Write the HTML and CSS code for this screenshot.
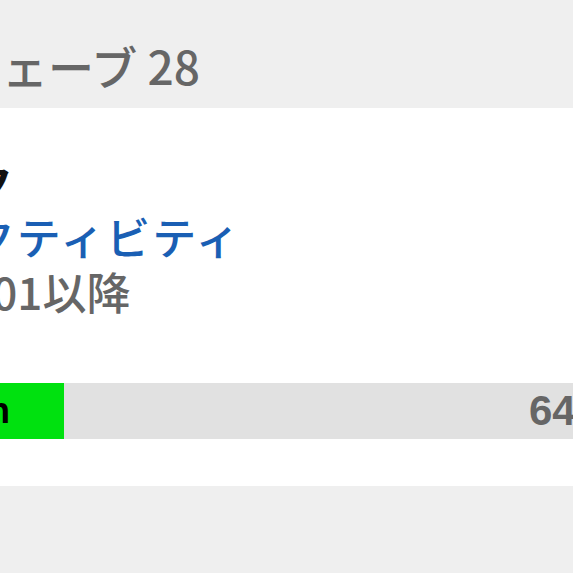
FILE: index.html
```html
<!DOCTYPE html>
<html lang="ja">
<head>
    <title>ウェーブ 28</title>
    <meta charset="utf-8">
    <link rel="stylesheet" href="styles.css">
</head>
<body>
<div class="page">
    <div class="page-heading">ウェーブ 28</div>
    <div class="card">
        <div class="card-title">トラック</div>
        <div class="card-link">アクティビティ</div>
        <div class="card-note">12.01以降</div>
        <div class="progress">
            <div class="progress-fill" style="width: 131px;">
                <span class="progress-label">Open</span>
            </div>
            <span class="progress-value">64%</span>
        </div>
    </div>
    <div class="page-footer"></div>
</div>
</body>
</html>
```

FILE: styles.css
```css
body {
    margin: 0;
    background-color: #efefef;
    overflow: hidden;
    font-family: "Noto Sans CJK JP", "Noto Sans", sans-serif;
}

.page {
    margin: 0 -120px;
}

.page-heading {
    padding: 38px 0 15px 76px;
    font-size: 46px;
    line-height: 55px;
    font-weight: 500;
    color: #666666;
    white-space: nowrap;
}

.card {
    background-color: #ffffff;
    padding: 46px 0 47px 53px;
}

.card-title,
.card-link,
.card-note {
    font-size: 44px;
    line-height: 55px;
    white-space: nowrap;
}

.card-title {
    font-weight: bold;
    color: #111111;
    margin-left: -96px;
}

.card-link {
    color: #1a5fb4;
    font-weight: 500;
    letter-spacing: 2px;
    margin-left: -6px;
}

.card-note {
    color: #666666;
    font-weight: 500;
    margin-left: -4px;
}

.progress {
    display: flex;
    align-items: center;
    margin-top: 64px;
    height: 56px;
    background-color: #e1e1e1;
}

.progress-fill {
    height: 100%;
    background-color: #00e10f;
    display: flex;
    align-items: center;
    justify-content: flex-end;
}

.progress-label {
    font-family: "Liberation Sans", sans-serif;
    font-weight: bold;
    font-size: 36px;
    color: #000000;
    padding-right: 54px;
}

.progress-value {
    margin-left: auto;
    margin-right: 80px;
    font-family: "Liberation Sans", sans-serif;
    font-weight: bold;
    font-size: 42px;
    color: #666666;
}

.page-footer {
    height: 120px;
}
```
